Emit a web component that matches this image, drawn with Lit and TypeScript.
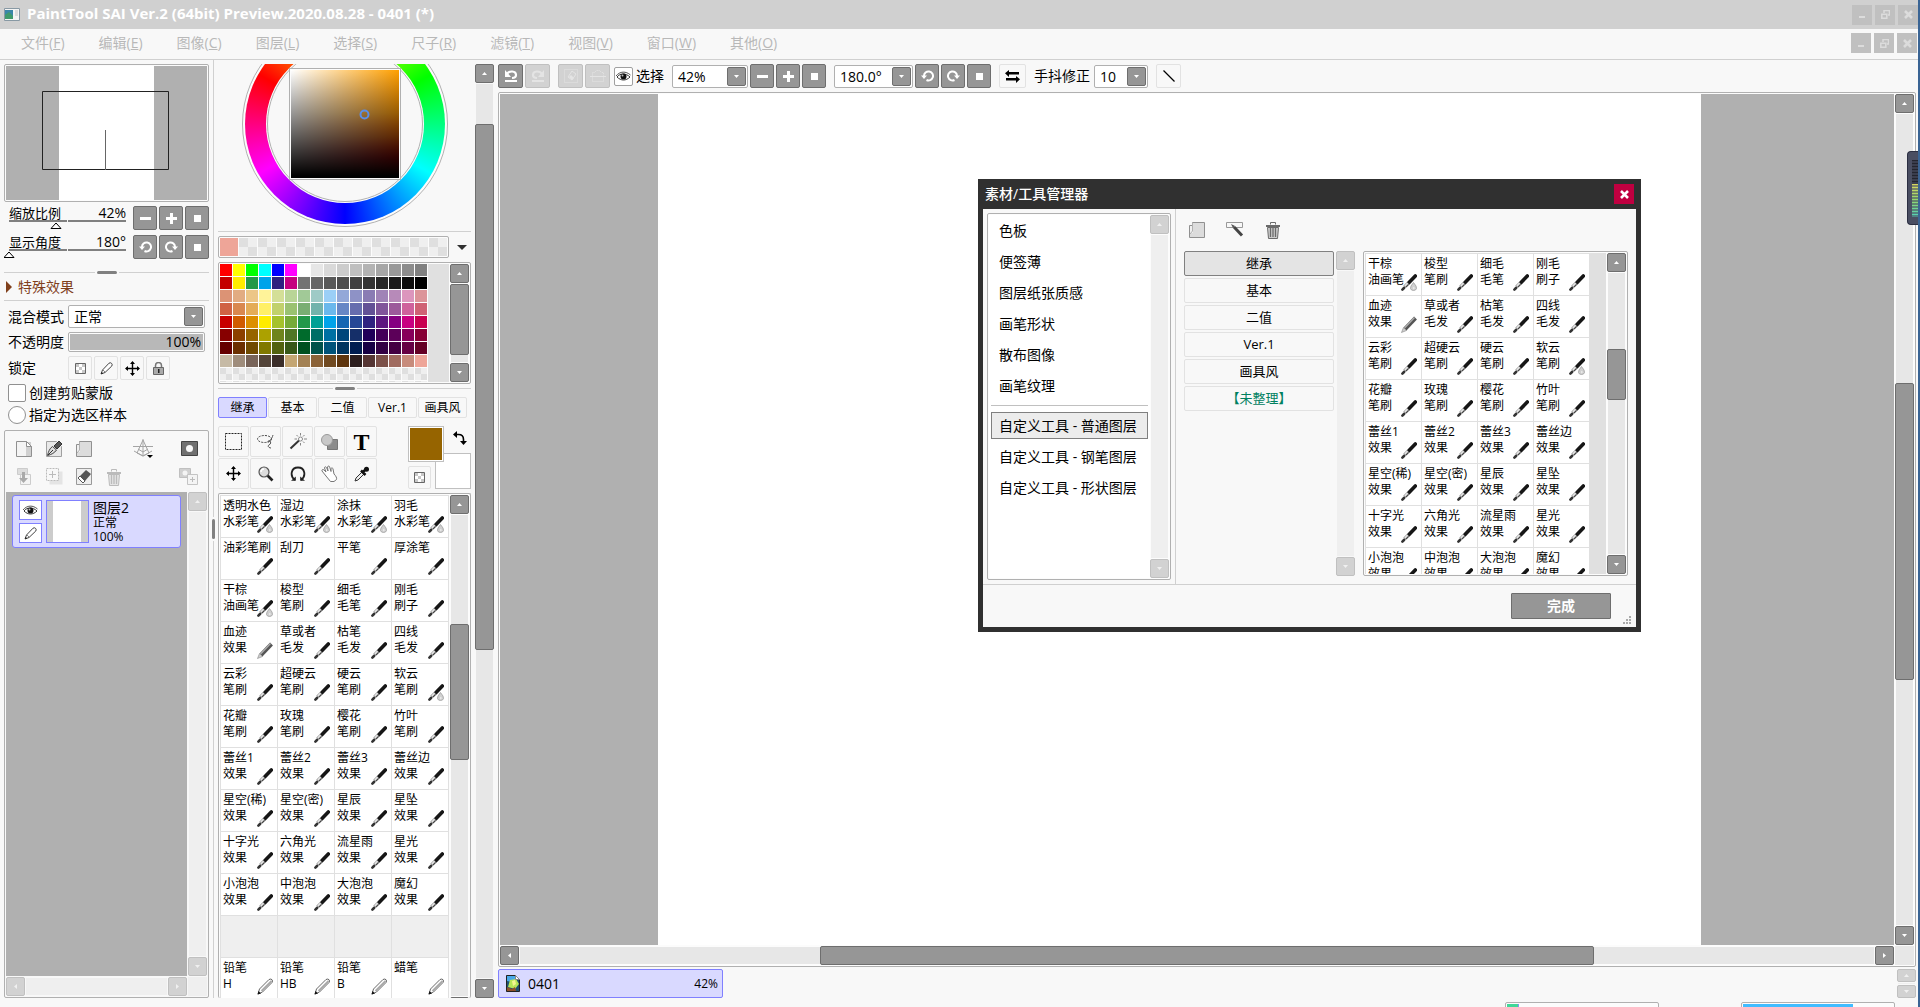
import { LitElement, html, svg, css, nothing, TemplateResult } from "lit";
import { customElement, property } from "lit/decorators.js";
import { classMap } from "lit/directives/class-map.js";
import { styleMap } from "lit/directives/style-map.js";

const base = css`
  * { box-sizing: border-box; }
  button, select, input { font: inherit; color: inherit; margin: 0; padding: 0; }
  button { cursor: default; }
  svg { display: block; }
  .solid {
    display: grid; place-items: center; flex: none;
    background: #969696; border: 1px solid #6e6e6e; border-radius: 2px; color: #fff;
  }
  .solid.faded { background: #d2d2d2; border-color: #c0c0c0; color: #f0f0f0; }
  .light {
    display: grid; place-items: center; flex: none;
    background: #f8f8f8; border: 1px solid #e2e2e2; border-radius: 2px; color: #000;
  }
  .plain { display: grid; place-items: center; flex: none; background: none; border: 0; }
  .frame { border: 1px solid #b0b0b0; border-radius: 2px; padding: 1px; background: #fcfcfc; }
`;

const picture = (w: number, h: number, body: TemplateResult) =>
  html`<svg width=${w} height=${h} viewBox="0 0 ${w} ${h}" fill="none" aria-hidden="true">${body}</svg>`;

const arrows: Record<string, string> = {
  up: "M0 4L2.5 1L5 4z",
  down: "M0 1L2.5 4L5 1z",
  left: "M4 0L1 2.5L4 5z",
  right: "M1 0L4 2.5L1 5z",
};
const arrow = (dir: string) => picture(5, 5, svg`<path d=${arrows[dir]} fill="currentColor"/>`);

const glyph = {
  minus: picture(11, 11, svg`<path d="M0 4h11v3H0z" fill="currentColor"/>`),
  plus: picture(11, 11, svg`<path d="M4 0h3v4h4v3H7v4H4V7H0V4h4z" fill="currentColor"/>`),
  square: picture(7, 7, svg`<path d="M0 0h7v7H0z" fill="currentColor"/>`),
  ccw: picture(13, 12, svg`<path d="M3 7V6A4.500 4.500 0 1 1 5.500 10" stroke="currentColor" stroke-width="2"/><path d="M0 5.500h6L3 9z" fill="currentColor"/>`),
  cw: picture(13, 12, svg`<path d="M10 7V6A4.500 4.500 0 1 0 7.500 10" stroke="currentColor" stroke-width="2"/><path d="M13 5.500H7L10 9z" fill="currentColor"/>`),
  undo: picture(14, 14, svg`<path d="M3 5C5 1.500 12 1.500 12 6c0 2-2 3-4 3" stroke="currentColor" stroke-width="2.200"/><path d="M1 1v7h6z" fill="currentColor"/><path d="M1 11h12v2H1z" fill="currentColor"/>`),
  redo: picture(14, 14, svg`<path d="M11 5C9 1.500 2 1.500 2 6c0 2 2 3 4 3" stroke="currentColor" stroke-width="2.200"/><path d="M13 1v7H7z" fill="currentColor"/><path d="M1 11h12v2H1z" fill="currentColor"/>`),
  deselect: picture(16, 16, svg`<path d="M1.500 1.500h13v13h-13z" stroke="currentColor" stroke-dasharray="1 1"/><path d="M5 9l4-6 4 3-4 6z" stroke="currentColor"/><path d="M6 9l3 3 2-2-3-3z" fill="currentColor"/>`),
  invertSel: picture(16, 16, svg`<path d="M2.500 7.500v-3h2l2-2h3l2 2h2v3M2.500 9.500v4h11v-4" stroke="currentColor" stroke-dasharray="1 1"/><path d="M0 8.500h16" stroke="currentColor"/>`),
  eye: picture(15, 11, svg`<path d="M1 6C4 2 10 2 14 6 10 10 5 10 1 6z" fill="#fff" stroke="#333"/><circle cx="7.500" cy="5.500" r="3" fill="#111"/><circle cx="6.500" cy="4.500" r="1" fill="#bbb"/><path d="M0 5C4 0 10 0 14.500 4" stroke="#555"/>`),
  flip: picture(15, 13, svg`<path d="M4 0v2h10v2.500H4V7L0 3.300zM11 6v2H1v2.500h10V13l4-3.700z" fill="#000"/>`),
  line: picture(12, 12, svg`<path d="M.5.5l11 11" stroke="#000" stroke-width="1.300"/>`),
  checker: picture(11, 11, svg`<path d="M.5.5h10v10H.5z" fill="#fff" stroke="#666"/><path d="M1 1h3v3H1zM7 1h3v3H7zM4 4h3v3H4zM1 7h3v3H1zM7 7h3v3H7z" fill="#c8c8c8"/>`),
  pencil: picture(13, 13, svg`<path d="M1 12l1.500-4L9 1.200q1.500-1 2.600.2t.2 2.600L5 10.500z" fill="#fff" stroke="#444"/><path d="M1 12l.8-2 1.300 1.200z" fill="#111"/><path d="M3 8l2 2" stroke="#888"/>`),
  move: picture(15, 15, svg`<path d="M7.500 1v13M1 7.500h13" stroke="currentColor" stroke-width="1.400"/><path d="M7.500 0L10 3H5zM7.500 15L10 12H5zM0 7.500L3 5v5zM15 7.500L12 5v5z" fill="currentColor"/>`),
  lock: picture(11, 13, svg`<path d="M2.500 6V3.500a3 3 0 0 1 6 0V6" stroke="#777" stroke-width="1.500"/><path d="M.5 5.500h10v7H.5z" fill="#aaa" stroke="#666"/><path d="M5 7h1.500v4H5z" fill="#222"/>`),
  sheet: picture(16, 18, svg`<path d="M.5 1.500h10l5 5v10H.5z" fill="#f4f4f4" stroke="#909090"/><path d="M10 2h5v14h-5z" fill="#d0d0d0"/><path d="M10.500 1.500v5h5z" fill="#fff" stroke="#909090"/>`),
  penSheet: picture(17, 18, svg`<path d="M.5 1.500h10l5 5v10H.5z" fill="#e8e8e8" stroke="#a0a0a0"/><path d="M1.500 15.500c1-4 2-7 5-9l4 3.500c-2 3-5 4.500-9 5.500z" fill="#ddd" stroke="#444"/><path d="M2 15l5-5" stroke="#333"/><path d="M8 6l5-5 3 3-5 5z" fill="#555" stroke="#333"/>`),
  folder: picture(16, 18, svg`<path d="M3.500 1.500h12v15H.5V4.500h3z" fill="#dcdcdc" stroke="#909090"/><path d="M1 5h3v7H1z" fill="#f0f0f0"/><path d="M3.500 2v8l-2.500 3" stroke="#b0b0b0"/>`),
  ruler: picture(20, 20, svg`<path d="M0 7.500h20M10 0v17M10 1L4 14l6 3 6-3zM1 12l9 5 9-5M5 10l5 3 5-3" stroke="#a4a4a4"/><path d="M14 16h6l-3 3z" fill="#000"/>`),
  mask: picture(17, 15, svg`<path d="M.5.5h16v14H.5z" fill="#707070" stroke="#444"/><circle cx="8.500" cy="7.500" r="3.500" fill="#f8f8f8"/>`),
  clip: picture(16, 17, svg`<path d="M1.500.5h10v6h-10z" fill="#ddd" stroke="#ccc"/><path d="M4.500 6.500h10v10h-10z" fill="#f4f4f4" stroke="#ccc"/><path d="M6 4h3v6h3l-4.500 5L3 10h3z" fill="#aaa"/>`),
  addDotted: picture(17, 17, svg`<path d="M3.500 3.500h13v13h-13z" fill="#e4e4e4"/><path d="M.5.5h12v12H.5z" fill="#f8f8f8" stroke="#bbb" stroke-dasharray="2 1"/><path d="M6.500 3v7M3 6.500h7" stroke="#bbb"/>`),
  eraserSheet: picture(16, 17, svg`<path d="M.5.5h15v16H.5z" fill="#eee" stroke="#999"/><path d="M4 8l6-6 5 4-6 7z" fill="#555"/><path d="M4 8l5 5-2 2-5-5z" fill="#fff" stroke="#555"/>`),
  bin: picture(16, 18, svg`<path d="M1 4h14v2H1z" fill="currentColor"/><path d="M5.500 3.500v-2h5v2" stroke="currentColor"/><path d="M2.500 6.500h11l-1 11h-9z" stroke="currentColor" fill="currentColor" fill-opacity=".3"/><path d="M5.500 7v9M8 7v9M10.500 7v9" stroke="currentColor" stroke-width="1.300"/>`),
  addMask: picture(19, 17, svg`<path d="M.5.500h11v9H.5z" fill="#d0d0d0" stroke="#c0c0c0"/><circle cx="6" cy="5" r="2.500" fill="#f4f4f4"/><path d="M8.500 6.500h10v10h-10z" fill="#f4f4f4" stroke="#c4c4c4"/><path d="M13.500 9v5M11 11.500h5" stroke="#bbb"/>`),
  marquee: picture(17, 17, svg`<path d="M.5.5h16v16H.5z" stroke="#222" stroke-dasharray="2 1"/>`),
  lasso: picture(18, 16, svg`<ellipse cx="7.500" cy="5" rx="7" ry="3.500" stroke="#444" stroke-dasharray="2 1.200"/><path d="M16 1c-1 4-4 7-5 7s1-2 2-1 1 3-1 4 0 3 2 3" stroke="#555"/>`),
  wand: picture(18, 17, svg`<path d="M1.500 15.500L10 7.500" stroke="#333" stroke-width="2"/><circle cx="11.500" cy="6" r="2" fill="#fff" stroke="#888"/><path d="M11.500 0v2.500M11.500 10v2.500M5.500 6H8M15 6h3M7.500 2l1.500 1.500M15.500 2L14 3.500M14 8.500l1.500 1.500" stroke="#888"/>`),
  shapes: picture(17, 16, svg`<path d="M6.500 5.500h10v10h-10z" fill="#8c8c8c" stroke="#777"/><circle cx="6" cy="6" r="5.500" fill="#c8c8c8" stroke="#999"/>`),
  zoom: picture(16, 16, svg`<path d="M9.500 9.500l5 5" stroke="#222" stroke-width="2.600"/><circle cx="6" cy="6" r="5" fill="#ddd" stroke="#555" stroke-width="1.200"/><path d="M3 6a3 3 0 0 1 3-3" stroke="#fff" stroke-width="1.500"/>`),
  rotate: picture(16, 16, svg`<path d="M5 14C-.5 10 1 1.500 8 1.500S16.500 10 11 14" stroke="#222" stroke-width="1.800"/><path d="M1 14.800h4.800v-4.300zM15 14.800h-4.800v-4.300z" fill="#222"/>`),
  hand: picture(17, 17, svg`<path d="M5 11L1 6c-.5-1.500 1-2 2-1l2 2-1.500-4c0-1.500 1.500-1.500 2-.5L7 6 6.500 2c.5-1.500 2-1 2.200 0L10 6.500 10 3.500c.8-1 2-.5 2 .5l1 5c2 2 3 4 2.500 5.500L13 16.500H9.500z" fill="#fff" stroke="#777"/>`),
  dropper: picture(16, 16, svg`<path d="M1 15l1-3 6-6 2 2-6 6z" fill="#eee" stroke="#333"/><path d="M7 4.500l4.500 4.500M9 6l3.500-3.500" stroke="#111" stroke-width="2.500"/><circle cx="12.500" cy="3.200" r="2.500" fill="#111"/>`),
  swap: picture(14, 14, svg`<path d="M2.500 3.500h3q5 0 5 5v2" stroke="#000" stroke-width="1.600"/><path d="M0 3.500L4 0v7zM10.500 14L7 10h7z" fill="#000"/>`),
  rename: picture(18, 15, svg`<path d="M.5.500h16v5H.5z" fill="#f8f8f8" stroke="#999"/><path d="M8 5l8 8.500" stroke="#444" stroke-width="3"/><path d="M5 2l4 2-2 2z" fill="#555"/>`),
  close: picture(9, 9, svg`<path d="M1 1l7 7M8 1l-7 7" stroke="currentColor" stroke-width="2.600"/>`),
  minimise: picture(9, 9, svg`<path d="M1 6h6v2H1z" fill="currentColor"/>`),
  restore: picture(9, 9, svg`<path d="M3 .5h5.500V5H7M3 0v3" stroke="currentColor" stroke-width="1.500"/><path d="M.8 4.200h5v4h-5z" stroke="currentColor" stroke-width="1.500"/>`),
  caret: picture(10, 5, svg`<path d="M0 0h10L5 5z" fill="#303030"/>`),
  app: picture(16, 13, svg`<path d="M.5.500h15v12H.5z" fill="#f4f4f4" stroke="#8899a4"/><path d="M1 2h8v9H1z" fill="#3a86a8"/><path d="M1 7l4-3 4 4v3H1z" fill="#3f9a6c"/><path d="M11 3h3M11 5h3M11 7h3" stroke="#c4c4c4"/>`),
  doc: picture(14, 17, svg`<path d="M.5.5h9l4 4v12H.5z" fill="#205070" stroke="#222"/><path d="M1 1h8l2 4-5 2-5-1z" fill="#48a8e8"/><path d="M4 5l6-1 3 5-4 5-7-2z" fill="#b8e858"/><path d="M6 6l3-1 1 4-3 2z" fill="#f4f890"/><path d="M1 12l5 2 3-2 1 4H1z" fill="#905028"/><path d="M9.500.5v4h4z" fill="#fff" stroke="#888"/>`),
  grip: picture(9, 8, svg`<path d="M6 0h2v2H6zM3 3h2v2H3zM6 6h2v2H6zM3 6h2v2H3zM0 6h2v2H0zM6 3h2v2H6z" fill="#aaa"/>`),
};

type Nib = "brush" | "wet" | "marker" | "pencil" | "none";

const brushBody = svg`
  <path d="M7.800 8.800L14.300 2" stroke="#161616" stroke-width="3.600" stroke-linecap="round"/>
  <path d="M3.500 13L7.200 9.300" stroke="#9a9a9a" stroke-width="3.600"/>
  <path d="M3.800 11.800l2.700-2.700" stroke="#f4f4f4" stroke-width="1.200"/>
  <path d="M5.200 13l2.500-2.500" stroke="#333"/>
  <path d="M1.400 15.600l1.600-1.600" stroke="#333" stroke-width="2.600" stroke-linecap="round"/>`;

const nibs: Record<Nib, TemplateResult | typeof nothing> = {
  brush: picture(16, 17, brushBody),
  wet: picture(16, 17, svg`${brushBody}<path d="M12.500 8.500q3.500 4 3 6t-3 2-3-2 3-6z" fill="#d0d0d0" stroke="#a0a0a0" stroke-width=".8"/><path d="M12 14h1.500" stroke="#fff"/>`),
  marker: picture(16, 17, svg`<path d="M4 13L14.500 2" stroke="#555" stroke-width="4"/><path d="M3.500 12L13.500 1.500" stroke="#aaa" stroke-width="1.500"/><path d="M.5 16.500l2-5 3 3z" fill="#ccc" stroke="#888" stroke-width=".6"/>`),
  pencil: picture(16, 17, svg`<path d="M1 16l1.500-5L12 1.500q2-1 3 .2t0 2.800L5.500 14z" fill="#fff" stroke="#555" stroke-width=".9"/><path d="M4.500 13L14.500 3" stroke="#aaa" stroke-width="1.800"/><path d="M.5 16.500l1-3.500 2.500 2.500z" fill="#111"/>`),
  none: nothing,
};

interface Brush { name: string; kind: string; nib: Nib; }

const row = (names: string, kinds: string, nibList: string): Brush[] => {
  const n = names.split("|"), k = kinds.split("|"), t = nibList.split("|");
  return n.map((name, i) => ({ name, kind: k[i % k.length], nib: t[i % t.length] as Nib }));
};

const sharedBrushes: Brush[] = [
  ...row("干棕|梭型|细毛|刚毛", "油画笔|笔刷|毛笔|刷子", "wet|brush|brush|brush"),
  ...row("血迹|草或者|枯笔|四线", "效果|毛发|毛发|毛发", "marker|brush|brush|brush"),
  ...row("云彩|超硬云|硬云|软云", "笔刷", "brush|brush|brush|wet"),
  ...row("花瓣|玫瑰|樱花|竹叶", "笔刷", "brush"),
  ...row("蕾丝1|蕾丝2|蕾丝3|蕾丝边", "效果", "brush"),
  ...row("星空(稀)|星空(密)|星辰|星坠", "效果", "brush"),
  ...row("十字光|六角光|流星雨|星光", "效果", "brush"),
  ...row("小泡泡|中泡泡|大泡泡|魔幻", "效果", "brush"),
];

const sideBrushes: Brush[] = [
  ...row("透明水色|湿边|涂抹|羽毛", "水彩笔", "wet"),
  ...row("油彩笔刷|刮刀|平笔|厚涂笔", "", "brush"),
  ...sharedBrushes,
  ...row("|||", "", "none"),
  ...row("铅笔|铅笔|铅笔|蜡笔", "H|HB|B|", "pencil"),
];

const swatches = [
  "f00 ff0 0f0 0ff 00f f0f fff e6e6e6 d9d9d9 ccc bfbfbf b3b3b3 a6a6a6 999 8c8c8c 808080",
  "c40000 ffec00 239847 00a3ea 2f2180 c40080 737373 666 595959 4d4d4d 404040 333 262626 1a1a1a 0d0d0d 000",
  "dc9375 e2ac82 ecc687 fff399 d4df97 b9d597 a1c997 9ecac6 9bcff7 93a8d8 8e92c6 8a7cb4 a083b7 b78ab9 dc96bd dc9499",
  "d06244 d9884f e4ac57 fff066 c1d16c 9ac271 7aae73 73b3ac 6bb8ec 6787c5 666dae 635196 81559a 9c5a9b cf629c cf6274",
  "c80000 d05b00 dc8f00 ffec00 a5c22c 76ab38 23984a 00a095 00a3ea 1566b2 254796 2f2180 5d177f 850081 c80081 c80050",
  "870000 8c4000 966400 aca100 6e841c 4f7625 006b2c 006e66 0070a3 00467b 152f69 200059 430059 5c0059 87005a 870036",
  "650000 6b2f00 704a00 807800 52620f 375718 005020 00524b 00537a 00345e 001d50 170044 320044 440042 650043 650025",
  "c6baa5 9f8d7c 786459 534439 3b2e29 c4a673 a38153 8a6238 714a21 5e350d 2c1e1d 553533 7c5149 a06b5f c78b7b eea598",
].flatMap((line) => line.split(" ").map((c) => "#" + c));

/** Scroll bar with two end buttons; before / thumb / after are proportional lengths. */
@customElement("sai-scroll")
export class SaiScroll extends LitElement {
  @property({ type: Boolean, reflect: true }) horizontal = false;
  @property({ type: Boolean, reflect: true }) disabled = false;
  @property({ type: Boolean, reflect: true }) compact = false;
  @property({ type: Number }) before = 0;
  @property({ type: Number }) thumb = 0;
  @property({ type: Number }) after = 1;

  static styles = [base, css`
    :host { display: flex; flex-direction: column; width: 19px; flex: none; gap: 1px; }
    :host([horizontal]) { flex-direction: row; width: auto; height: 19px; }
    .end { width: 19px; height: 19px; }
    :host([compact]) .end { height: 13px; }
    .track { flex: 1; display: flex; flex-direction: column; min-height: 0;
      background: linear-gradient(#e7e7e7, #e7e7e7) center / 17px 100% no-repeat; }
    :host([horizontal]) .track { flex-direction: row; background-size: 100% 17px; }
    :host([disabled]) .track { background-image: linear-gradient(#efefef, #efefef); }
    .thumb { background: #969696; border: 1px solid #6e6e6e; border-radius: 2px; }
  `];

  render() {
    const tone = classMap({ end: true, solid: true, faded: this.disabled });
    const grow = (n: number) => styleMap({ flex: `${n} 1 0px` });
    return html`
      <button class=${tone} ?disabled=${this.disabled} aria-label="scroll back">${arrow(this.horizontal ? "left" : "up")}</button>
      <div class="track">
        <div style=${grow(this.before)}></div>
        ${this.thumb ? html`<div class="thumb" style=${grow(this.thumb)}></div>` : nothing}
        <div style=${grow(this.after)}></div>
      </div>
      <button class=${tone} ?disabled=${this.disabled} aria-label="scroll forward">${arrow(this.horizontal ? "right" : "down")}</button>`;
  }
}

@customElement("brush-grid")
export class BrushGrid extends LitElement {
  @property({ attribute: false }) brushes: Brush[] = [];

  static styles = [base, css`
    :host { display: grid; grid-template-columns: repeat(4, var(--cell, 56px)); grid-auto-rows: 41px;
      gap: 1px; padding: 1px; background: #e0e0e0; align-content: start; }
    .cell { display: grid; grid-template: 1fr / 1fr; background: #fff; border: 0; text-align: left;
      font-size: 12px; line-height: 16px; white-space: nowrap; }
    .blank { background: #efefef; }
    .label { grid-area: 1 / 1; padding: 2px 0 0 2px; align-self: start; }
    .nib { grid-area: 1 / 1; justify-self: end; align-self: end; padding: 0 4px 4px 0; }
  `];

  render() {
    return this.brushes.map((b) => html`
      <button class=${classMap({ cell: true, blank: b.nib === "none" })} aria-label=${b.name || "空"}>
        <span class="label">${b.name}<br>${b.kind}</span>
        <span class="nib">${nibs[b.nib]}</span>
      </button>`);
  }
}

@customElement("layer-side")
export class LayerSide extends LitElement {
  static styles = [base, css`
    :host { display: flex; flex-direction: column; width: 213px; flex: none; padding: 4px 4px 0 4px;
      font-size: 14px; line-height: 20px; min-height: 0; }
    .nav { height: 138px; flex: none; }
    .nav svg { width: 100%; height: 100%; }
    .sliders { display: grid; gap: 5px; margin-top: 4px; flex: none; }
    .slide { display: flex; gap: 2px; height: 24px; }
    .scale { flex: 1; display: grid; grid-template: 1fr / 1fr auto; margin-right: 5px; font-size: 13px; line-height: 14px; }
    .scale label { grid-area: 1 / 1; padding-left: 5px; }
    .scale output { grid-area: 1 / 2; font-size: 14px; }
    .scale svg { grid-area: 1 / 1 / 2 / 3; }
    .scale input { grid-area: 1 / 1 / 2 / 3; opacity: 0; width: 100%; }
    .slide .solid { width: 24px; height: 24px; }
    .split { display: flex; align-items: center; gap: 2px; height: 3px; margin-top: 12px; flex: none; }
    .rule { flex: 1; height: 1px; background: #d0d0d0; }
    .knob { width: 20px; height: 3px; border-radius: 2px; background: #808080; }
    .effects { display: flex; align-items: center; gap: 6px; height: 27px; padding-left: 2px; flex: none;
      background: none; border: 0; border-bottom: 1px solid #d0d0d0; color: #80401c; }
    .form { display: grid; grid-template-columns: 60px 1fr; gap: 4px 0; padding: 4px 4px 0 4px; align-items: center; flex: none; }
    .combo { display: grid; height: 23px; background: #fff; }
    .combo select { grid-area: 1 / 1; appearance: none; border: 0; background: none; padding-left: 4px; }
    .combo .solid { grid-area: 1 / 1; justify-self: end; width: 19px; height: 19px; pointer-events: none; }
    .amount { display: grid; height: 20px; }
    .amount input { grid-area: 1 / 1; appearance: none; background: #b8b8b8; width: 100%; height: 16px; }
    .amount input::-webkit-slider-thumb { appearance: none; width: 1px; height: 16px; }
    .amount output { grid-area: 1 / 1; justify-self: end; line-height: 16px; padding-right: 2px; pointer-events: none; }
    .locks { display: flex; gap: 2px; }
    .locks .light { width: 24px; height: 24px; }
    .pick { display: flex; align-items: center; gap: 3px; height: 18px; margin: 4px 0 0 4px; flex: none; }
    .pick input { appearance: none; width: 18px; height: 18px; border: 1px solid #909090; border-radius: 2px; background: #fff; }
    .pick .round { border-radius: 50%; }
    .panel { flex: 1; display: flex; flex-direction: column; margin-top: 6px; min-height: 0; background: #f8f8f8; }
    .tools { display: grid; grid-template-columns: 30px 30px 30px 30px 28px 1fr; height: 60px; padding: 2px 9px 2px 3px; flex: none; }
    .tools .plain { color: #bbb; }
    .tools .far { justify-self: end; }
    .area { flex: 1; display: grid; grid-template: 1fr 19px / 1fr 19px; gap: 1px; min-height: 0; }
    .list { background: #b0b0b0; padding: 3px 6px; }
    .layer { display: flex; height: 53px; border: 1px solid #8080ff; border-radius: 3px; background: #d9d9ff; padding: 4px 6px; }
    .flags { display: grid; gap: 3px; margin-right: 4px; align-content: start; }
    .flags button { width: 23px; height: 20px; display: grid; place-items: center; background: #fff; border: 1px solid #8080ff; }
    .thumb { width: 43px; height: 43px; border: 1px solid #8080ff; background: #fff; }
    .thumb div { height: 100%; border: solid #ccc; border-width: 0 7px 0 6px; }
    .info { padding-left: 4px; font-size: 12px; line-height: 14px; white-space: nowrap; }
    .info div:first-child { font-size: 14px; line-height: 16px; }
    .corner { background: #efefef; }
  `];

  private scale(label: string, value: string, at: number, buttons: [string, TemplateResult][]) {
    return html`
      <div class="slide">
        <div class="scale">
          <label for=${"s" + at}>${label}</label><output>${value}</output>
          <svg width="122" height="24" viewBox="0 0 122 24" fill="none">
            <path d="M5 15h58M64 15h58" stroke="#808080" stroke-width="2"/>
            <path d="M${at} 17.500l5 5.500h-10z" fill="#fff" stroke="#000" transform="translate(0 -.5)"/>
          </svg>
          <input id=${"s" + at} type="range">
        </div>
        ${buttons.map(([name, g]) => html`<button class="solid" aria-label=${name}>${g}</button>`)}
      </div>`;
  }

  render() {
    return html`
      <div class="nav frame">
        <svg viewBox="0 0 201 134" preserveAspectRatio="none" fill="none">
          <path d="M0 0h201v134H0z" fill="#b0b0b0"/><path d="M53 0h95v134H53z" fill="#fff"/>
          <path d="M36.500 25.500h126v78h-126z" stroke="#222"/><path d="M99.500 64v40" stroke="#666"/>
        </svg>
      </div>
      <div class="sliders">
        ${this.scale("缩放比例", "42%", 52, [["缩小", glyph.minus], ["放大", glyph.plus], ["重置缩放", glyph.square]])}
        ${this.scale("显示角度", "180°", 5, [["左转", glyph.ccw], ["右转", glyph.cw], ["重置角度", glyph.square]])}
      </div>
      <div class="split"><div class="rule"></div><div class="knob"></div><div class="rule"></div></div>
      <button class="effects">${picture(6, 12, svg`<path d="M0 0l6 6-6 6z" fill="#80401c"/>`)}特殊效果</button>
      <div class="form">
        <label for="mode">混合模式</label>
        <div class="combo frame"><select id="mode"><option>正常</option></select><span class="solid">${arrow("down")}</span></div>
        <label for="opacity">不透明度</label>
        <div class="amount frame"><input id="opacity" type="range" value="100"><output>100%</output></div>
        <span>锁定</span>
        <div class="locks">
          <button class="light" aria-label="锁定透明">${glyph.checker}</button>
          <button class="light" aria-label="锁定绘画">${glyph.pencil}</button>
          <button class="light" aria-label="锁定移动">${glyph.move}</button>
          <button class="light" aria-label="全部锁定">${glyph.lock}</button>
        </div>
      </div>
      <label class="pick"><input type="checkbox">创建剪贴蒙版</label>
      <label class="pick"><input class="round" type="radio">指定为选区样本</label>
      <div class="panel frame">
        <div class="tools">
          <button class="plain" aria-label="新建图层">${glyph.sheet}</button>
          <button class="plain" aria-label="新建钢笔图层">${glyph.penSheet}</button>
          <button class="plain" aria-label="新建图层组">${glyph.folder}</button>
          <span></span>
          <button class="plain" aria-label="透视尺">${glyph.ruler}</button>
          <button class="plain far" aria-label="图层蒙版">${glyph.mask}</button>
          <button class="plain" aria-label="向下转写">${glyph.clip}</button>
          <button class="plain" aria-label="向下合并">${glyph.addDotted}</button>
          <button class="plain" aria-label="清除图层">${glyph.eraserSheet}</button>
          <button class="plain" aria-label="删除图层">${glyph.bin}</button>
          <span></span>
          <button class="plain far" aria-label="添加蒙版">${glyph.addMask}</button>
        </div>
        <div class="area">
          <div class="list">
            <div class="layer">
              <div class="flags">
                <button aria-label="显示图层">${glyph.eye}</button>
                <button aria-label="编辑图层">${glyph.pencil}</button>
              </div>
              <div class="thumb"><div></div></div>
              <div class="info"><div>图层2</div><div>正常</div><div>100%</div></div>
            </div>
          </div>
          <sai-scroll disabled></sai-scroll>
          <sai-scroll horizontal disabled></sai-scroll>
          <div class="corner"></div>
        </div>
      </div>`;
  }
}

@customElement("colour-side")
export class ColourSide extends LitElement {
  static styles = [base, css`
    :host { display: flex; width: 284px; flex: none; padding: 4px 4px 0 4px; gap: 4px; min-height: 0; }
    .content { flex: 1; min-width: 0; display: flex; flex-direction: column; overflow: hidden; }
    .wheel { height: 163px; flex: none; overflow: hidden; display: flex; align-items: flex-end; padding-left: 24px; margin-bottom: 4px; }
    .ring { width: 206px; height: 206px; flex: none; border: 1px solid #b0b0b0; border-radius: 50%; padding: 2px; background: #fcfcfc; }
    .hue { width: 200px; height: 200px; border-radius: 50%; display: grid; place-items: center;
      background: conic-gradient(from 300deg, #f00, #ff0, #0f0, #0ff, #00f, #f0f, #f00); }
    .disc { width: 158px; height: 158px; border-radius: 50%; background: #fcfcfc; padding: 1px; display: grid; place-items: center; }
    .inner { width: 156px; height: 156px; border: 1px solid #b0b0b0; border-radius: 50%; background: #f8f8f8; display: grid; place-items: center; }
    .tone { width: 112px; height: 112px; border: 1px solid #b0b0b0; padding: 1px; background: #fcfcfc; }
    .shade { width: 108px; height: 108px; padding: 39px 0 0 68px;
      background: linear-gradient(to bottom, transparent, #000 98%),
        linear-gradient(to right, #fff, transparent),
        linear-gradient(to bottom, #ffa000 0, #ff9800 40%, #ff6800 62%, #ff0000 82%); }
    .rule { height: 1px; background: #d0d0d0; flex: none; }
    .recent { display: flex; align-items: center; margin: 4px 0; gap: 8px; flex: none; }
    .chips { display: flex; gap: 1px; height: 22px; width: 231px; }
    .chip { width: 18px; height: 18px; border: 0; background: repeating-conic-gradient(#efefef 0 25%, #dfdfdf 0 50%) 0 0 / 18px 18px; }
    .chip.used { background: #eea598; }
    .palette { display: flex; height: 122px; flex: none; gap: 1px; }
    .swatches { flex: 1; display: grid; grid-template-columns: repeat(16, 12px); grid-auto-rows: 12px; gap: 1px;
      overflow: hidden; background: linear-gradient(to right, #fcfcfc 208px, #e0e0e0 208px); }
    .swatch { border: 0; background: repeating-conic-gradient(#efefef 0 25%, #dfdfdf 0 50%) 0 0 / 12px 12px; }
    .split { display: flex; align-items: center; gap: 2px; height: 3px; margin: 3px 0 7px; flex: none; }
    .split .rule { flex: 1; }
    .knob { width: 20px; height: 3px; border-radius: 2px; background: #808080; }
    .tabs { display: flex; gap: 1px; height: 21px; flex: none; font-size: 12px; line-height: 16px; }
    .tabs .light { width: 49px; }
    .tabs .on { background: #d9d9ff; border-color: #8080ff; }
    .kit { display: flex; justify-content: space-between; margin: 8px 0 4px; flex: none; }
    .tools { display: grid; grid-template-columns: repeat(5, 31px); grid-auto-rows: 31px; gap: 1px; }
    .letter { font: bold 24px/24px "Liberation Serif", serif; }
    .colours { display: grid; grid-template: 27px 9px 27px / 27px 9px 27px; }
    .fore { grid-area: 1 / 1 / 3 / 3; border: 1px solid #c0c0c0; background: #966400; box-shadow: inset 0 0 0 1px #fff; z-index: 1; }
    .back { grid-area: 2 / 2 / 4 / 4; border: 1px solid #c0c0c0; background: #fff; }
    .swap { grid-area: 1 / 3; padding: 0 0 4px 4px; }
    .clear { grid-area: 3 / 1; width: 23px; height: 23px; align-self: end; }
    .brushes { flex: 1; display: flex; min-height: 0; border-bottom: 0; padding-bottom: 0; gap: 1px; overflow: hidden; }
    brush-grid { flex: 1; overflow: hidden; }
    .tall { margin-bottom: -18px; }
  `];

  render() {
    const tools: [string, TemplateResult][] = [
      ["选框", glyph.marquee], ["套索", glyph.lasso], ["魔棒", glyph.wand], ["形状", glyph.shapes],
      ["文字", html`<span class="letter">T</span>`], ["移动", glyph.move], ["缩放", glyph.zoom],
      ["旋转", glyph.rotate], ["抓手", glyph.hand], ["吸管", glyph.dropper],
    ];
    return html`
      <div class="content">
        <div class="wheel"><div class="ring"><div class="hue"><div class="disc"><div class="inner"><div class="tone">
          <div class="shade">${picture(11, 11, svg`<circle cx="5.500" cy="5.500" r="4" stroke="#5a8ee8" stroke-width="2"/>`)}</div>
        </div></div></div></div></div></div>
        <div class="rule"></div>
        <div class="recent">
          <div class="chips frame">${Array.from({ length: 12 }, (_, i) =>
            html`<button class=${classMap({ chip: true, used: i === 0 })} aria-label="最近颜色 ${i + 1}"></button>`)}</div>
          <button class="plain" aria-label="颜色菜单">${glyph.caret}</button>
        </div>
        <div class="palette frame">
          <div class="swatches">
            ${swatches.map((c) => html`<button class="swatch" aria-label=${c} style=${styleMap({ background: c })}></button>`)}
            ${Array.from({ length: 32 }, () => html`<button class="swatch" aria-label="空色格"></button>`)}
          </div>
          <sai-scroll .before=${0} .thumb=${71} .after=${7}></sai-scroll>
        </div>
        <div class="split"><div class="rule"></div><div class="knob"></div><div class="rule"></div></div>
        <div class="tabs">${["继承", "基本", "二值", "Ver.1", "画具风"].map((t, i) =>
          html`<button class=${classMap({ light: true, on: i === 0 })}>${t}</button>`)}</div>
        <div class="kit">
          <div class="tools">${tools.map(([n, g]) => html`<button class="light" aria-label=${n}>${g}</button>`)}</div>
          <div class="colours">
            <button class="fore" aria-label="前景色"></button>
            <button class="back" aria-label="背景色"></button>
            <button class="swap plain" aria-label="交换颜色">${glyph.swap}</button>
            <button class="clear light" aria-label="透明色">${glyph.checker}</button>
          </div>
        </div>
        <div class="brushes frame">
          <brush-grid .brushes=${sideBrushes}></brush-grid>
          <sai-scroll class="tall" .before=${109} .thumb=${135} .after=${237}></sai-scroll>
        </div>
      </div>
      <sai-scroll .before=${40} .thumb=${525} .after=${329}></sai-scroll>`;
  }
}

@customElement("tool-manager")
export class ToolManager extends LitElement {
  static styles = [base, css`
    :host { display: flex; flex-direction: column; background: #f8f8f8; border: 5px solid #303030; border-top: 0;
      font-size: 14px; line-height: 20px; }
    .title { display: flex; align-items: center; justify-content: space-between; height: 30px; flex: none;
      padding: 0 2px; background: #303030; color: #fff; font-weight: 500; }
    .close { width: 20px; height: 20px; display: grid; place-items: center; border: 0; background: #c00040; color: #fff; }
    .body { flex: 1; display: flex; min-height: 0; border-bottom: 1px solid #d0d0d0; }
    .kinds { width: 184px; margin: 4px; display: flex; }
    .menu { flex: 1; display: flex; flex-direction: column; gap: 4px; padding: 2px 2px 3px; background: #fff; }
    .menu button { height: 27px; border: 1px solid transparent; background: none; text-align: left; padding-left: 7px; white-space: nowrap; }
    .menu .on { background: #ececec; border-color: #808080; }
    .menu .bar { height: 1px; background: #c0c0c0; margin: 2px 0; }
    .work { flex: 1; min-width: 0; border-left: 1px solid #d0d0d0; padding: 8px; display: flex; flex-direction: column; }
    .icons { display: flex; height: 25px; gap: 12px; align-items: center; margin-bottom: 9px; }
    .icons .plain { width: 26px; height: 25px; color: #6a6a6a; }
    .lists { flex: 1; display: flex; min-height: 0; }
    .groups { width: 150px; display: flex; flex-direction: column; gap: 2px; margin-right: 2px; }
    .groups .light { height: 25px; font-size: 13px; line-height: 18px; padding-bottom: 2px; }
    .groups .on { background: #e4e4e4; border-color: #808080; }
    .groups .free { color: #008060; }
    .brushes { flex: 1; display: flex; gap: 1px; margin-left: 8px; min-width: 0; --cell: 55px; }
    brush-grid { flex: 1; overflow: hidden; }
    .foot { height: 42px; display: flex; justify-content: flex-end; align-items: flex-end; padding: 0 4px 3px; gap: 12px; flex: none; }
    .done { width: 100px; height: 26px; font-weight: 700; border-radius: 1px; margin-bottom: 5px; }
  `];

  render() {
    const kinds = ["色板", "便签薄", "图层纸张质感", "画笔形状", "散布图像", "画笔纹理"];
    const custom = ["自定义工具 - 普通图层", "自定义工具 - 钢笔图层", "自定义工具 - 形状图层"];
    const groups = ["继承", "基本", "二值", "Ver.1", "画具风", "【未整理】"];
    return html`
      <div class="title"><span>素材/工具管理器</span><button class="close" aria-label="关闭">${glyph.close}</button></div>
      <div class="body">
        <div class="kinds frame">
          <div class="menu">
            ${kinds.map((k) => html`<button>${k}</button>`)}
            <div class="bar"></div>
            ${custom.map((k, i) => html`<button class=${i === 0 ? "on" : ""}>${k}</button>`)}
          </div>
          <sai-scroll disabled></sai-scroll>
        </div>
        <div class="work">
          <div class="icons">
            <button class="plain" aria-label="新建分组">${glyph.folder}</button>
            <button class="plain" aria-label="重命名">${glyph.rename}</button>
            <button class="plain" aria-label="删除">${glyph.bin}</button>
          </div>
          <div class="lists">
            <div class="groups">${groups.map((g, i) =>
              html`<button class=${classMap({ light: true, on: i === 0, free: i === 5 })}>${g}</button>`)}</div>
            <sai-scroll disabled></sai-scroll>
            <div class="brushes frame">
              <brush-grid .brushes=${sharedBrushes}></brush-grid>
              <sai-scroll .before=${77} .thumb=${49} .after=${155}></sai-scroll>
            </div>
          </div>
        </div>
      </div>
      <div class="foot"><button class="done solid">完成</button>${glyph.grip}</div>`;
  }
}

@customElement("canvas-area")
export class CanvasArea extends LitElement {
  static styles = [base, css`
    :host { flex: 1; min-width: 0; display: flex; flex-direction: column; padding-right: 2px; font-size: 14px; line-height: 20px; }
    .bar { display: flex; align-items: center; height: 32px; flex: none; gap: 8px; white-space: nowrap; }
    .group { display: flex; align-items: center; gap: 2px; }
    .loose { gap: 4px; }
    .bar .solid, .bar .light { width: 25px; height: 24px; }
    .bar .step { width: 24px; }
    .bar .flip { width: 27px; }
    .bar .faded { color: #e4e4e4; }
    .see-row { display: flex; align-items: center; gap: 3px; margin-left: 2px; }
    .bar .see { width: 19px; height: 19px; border-color: #a0a0a0; background: #fff; }
    .combo { display: grid; height: 23px; background: #fff; }
    .combo select { grid-area: 1 / 1; appearance: none; border: 0; background: none; padding-left: 4px; width: 100%; }
    .bar .combo .solid { grid-area: 1 / 1; justify-self: end; width: 19px; height: 19px; pointer-events: none; }
    .wide { width: 76px; }
    .wider { width: 79px; }
    .slim { width: 54px; }
    .bay { flex: 1; display: grid; grid-template: minmax(0, 1fr) 19px / minmax(0, 1fr) 19px; gap: 1px; min-height: 0; }
    .view { position: relative; display: flex; background: #b0b0b0; }
    .edge-left { flex: 158; }
    .paper { flex: 1043; background: #fff; }
    .edge-right { flex: 193; }
    .corner { background: #e7e7e7; }
    tool-manager { position: absolute; left: 478px; top: 85px; width: 663px; height: 453px; }
    .docs { display: flex; justify-content: space-between; height: 29px; margin-top: 2px; flex: none; }
    .doc { display: flex; align-items: center; gap: 8px; width: 225px; padding: 0 4px 0 7px; background: #d9d9ff;
      border: 1px solid #8080ff; border-radius: 2px; }
    .name { flex: 1; text-align: left; }
    .ratio { font-size: 12px; }
  `];

  private combo(cls: string, name: string, value: string) {
    return html`<div class="combo frame ${cls}"><select aria-label=${name}><option>${value}</option></select><span class="solid">${arrow("down")}</span></div>`;
  }

  render() {
    const btn = (n: string, g: TemplateResult, cls = "solid") => html`<button class=${cls} aria-label=${n}>${g}</button>`;
    return html`
      <div class="bar">
        <div class="group">${btn("撤销", glyph.undo)}${btn("重做", glyph.redo, "solid faded")}</div>
        <div class="group">${btn("取消选择", glyph.deselect, "solid faded")}${btn("反选", glyph.invertSel, "solid faded")}
          <label class="see-row"><button class="light see" aria-label="显示选区">${glyph.eye}</button>选择</label></div>
        <div class="group">${this.combo("wide", "缩放", "42%")}${btn("缩小", glyph.minus, "solid step")}${btn("放大", glyph.plus, "solid step")}${btn("重置缩放", glyph.square, "solid step")}</div>
        <div class="group">${this.combo("wider", "角度", "180.0°")}${btn("左转", glyph.ccw, "solid step")}${btn("右转", glyph.cw, "solid step")}${btn("重置角度", glyph.square, "solid step")}</div>
        ${btn("水平翻转", glyph.flip, "light flip")}
        <div class="group loose"><span>手抖修正</span>${this.combo("slim", "手抖修正", "10")}</div>
        ${btn("直线", glyph.line, "light")}
      </div>
      <div class="bay frame">
        <div class="view">
          <div class="edge-left"></div><div class="paper"></div><div class="edge-right"></div>
          <tool-manager></tool-manager>
        </div>
        <sai-scroll .before=${270} .thumb=${295} .after=${246}></sai-scroll>
        <sai-scroll horizontal .before=${300} .thumb=${774} .after=${280}></sai-scroll>
        <div class="corner"></div>
      </div>
      <div class="docs">
        <button class="doc">${glyph.doc}<span class="name">0401</span><span class="ratio">42%</span></button>
        <sai-scroll compact disabled></sai-scroll>
      </div>`;
  }
}

@customElement("app-root")
export class AppRoot extends LitElement {
  static styles = [base, css`
    :host { display: flex; flex-direction: column; height: 100vh; position: relative; overflow: hidden;
      background: #f8f8f8; color: #000; border-right: 2px solid #3a6494; box-sizing: border-box;
      font-family: "Open Sans", "Noto Sans CJK SC", sans-serif; }
    .title { display: flex; align-items: center; height: 29px; flex: none; background: #d0d0d0; color: #fff;
      font-size: 15px; font-weight: 700; line-height: 20px; padding-left: 4px; gap: 7px; }
    .caption { flex: 1; padding-bottom: 3px; }
    .win { display: flex; gap: 3px; }
    .win button { width: 20px; height: 20px; display: grid; place-items: center; background: #c0c0c0; color: #dcdcdc; border: 0; }
    .menu { display: flex; align-items: center; height: 31px; flex: none; border-bottom: 1px solid #d0d0d0;
      padding: 0 1px 2px 21px; color: #b8b8b8; font-size: 14px; line-height: 20px; }
    .menu nav { flex: 1; display: flex; gap: 34px; }
    .menu a { color: inherit; text-decoration: none; white-space: nowrap; }
    .main { flex: 1; display: flex; min-height: 0; }
    .divide { display: flex; flex-direction: column; align-items: center; width: 1px; gap: 2px; }
    .divide i { width: 1px; background: #d0d0d0; }
    .above { flex: 457; }
    .below { flex: 457; }
    .divide b { width: 3px; height: 20px; border-radius: 2px; background: #808080; flex: none; }
    .status { display: flex; justify-content: flex-end; gap: 82px; height: 9px; flex: none; overflow: hidden; padding: 4px 23px 0 0; }
    .gauge { width: 154px; height: 12px; display: flex; }
    .green { background: #40d898; }
    .blue { background: #8890f8; }
    .sky { background: #40bcff; }
    .meter { position: absolute; right: -2px; top: 151px; width: 13px; height: 74px; border-radius: 4px 0 0 4px;
      background: #4a4e62; border: 1px solid #2c2f42; border-right: 0; padding: 8px 2px 0 4px; }
    .level { height: 57px; background:
      repeating-linear-gradient(to bottom, transparent 0 1px, #4a4e6299 1px 3px),
      linear-gradient(to bottom, #23252f 0 42%, #d8d860 43%, #90d870 70%, #50d0b8 100%); }
  `];

  private winButtons() {
    return html`<div class="win">
      <button aria-label="最小化">${glyph.minimise}</button>
      <button aria-label="还原">${glyph.restore}</button>
      <button aria-label="关闭">${glyph.close}</button>
    </div>`;
  }

  render() {
    const menus = ["文件F", "编辑E", "图像C", "图层L", "选择S", "尺子R", "滤镜T", "视图V", "窗口W", "其他O"];
    return html`
      <header class="title">${glyph.app}<span class="caption">PaintTool SAI Ver.2 (64bit) Preview.2020.08.28 - 0401 (*)</span>${this.winButtons()}</header>
      <div class="menu">
        <nav>${menus.map((m) => html`<a href="#">${m.slice(0, 2)}(<u>${m[2]}</u>)</a>`)}</nav>
        ${this.winButtons()}
      </div>
      <main class="main">
        <layer-side></layer-side>
        <div class="divide"><i class="above"></i><b></b><i class="below"></i></div>
        <colour-side></colour-side>
        <canvas-area></canvas-area>
      </main>
      <footer class="status">
        <div class="gauge frame"><div class="green" style=${styleMap({ width: "7%" })}></div><div class="blue" style=${styleMap({ width: "1%" })}></div></div>
        <div class="gauge frame"><div class="sky" style=${styleMap({ width: "73%" })}></div></div>
      </footer>
      <div class="meter"><div class="level"></div></div>`;
  }
}
